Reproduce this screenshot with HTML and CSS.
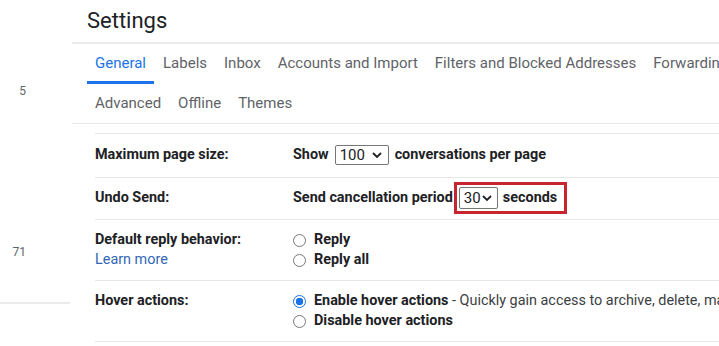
FILE: index.html
```html
<!DOCTYPE html>
<html lang="en">
<head>
  <meta charset="UTF-8">
  <meta name="viewport" content="width=device-width, initial-scale=1.0">
  <title>Settings</title>
  <link rel="stylesheet" href="styles.css">
</head>
<body>
  <div class="page">
    <aside class="sidebar">
      <span class="count count-top">5</span>
      <span class="count count-mid">71</span>
      <div class="side-rule"></div>
    </aside>

    <main class="settings">
      <h1 class="settings-title">Settings</h1>

      <nav class="tabs">
        <div class="tab-row">
          <a class="tab active">General</a>
          <a class="tab">Labels</a>
          <a class="tab">Inbox</a>
          <a class="tab">Accounts and Import</a>
          <a class="tab">Filters and Blocked Addresses</a>
          <a class="tab">Forwarding and POP/IMAP</a>
        </div>
        <div class="tab-row tab-row-last">
          <a class="tab">Advanced</a>
          <a class="tab">Offline</a>
          <a class="tab">Themes</a>
        </div>
      </nav>

      <div class="prefs">
        <div class="pref pref-page">
          <div class="pref-label">Maximum page size:</div>
          <div class="pref-value">
            Show
            <span class="select select-wide">100
              <svg class="chevron" viewBox="0 0 10 6" width="10" height="6"><path d="M1 1l4 4 4-4" fill="none" stroke="#202124" stroke-width="1.8"/></svg>
            </span>
            conversations per page
          </div>
        </div>

        <div class="pref pref-undo">
          <div class="pref-label">Undo Send:</div>
          <div class="pref-value">
            Send cancellation period
            <span class="highlight">
              <span class="select">30
                <svg class="chevron" viewBox="0 0 10 6" width="10" height="6"><path d="M1 1l4 4 4-4" fill="none" stroke="#202124" stroke-width="1.8"/></svg>
              </span>
              seconds
            </span>
          </div>
        </div>

        <div class="pref">
          <div class="pref-label">
            Default reply behavior:<br>
            <a class="learn">Learn more</a>
          </div>
          <div class="pref-value">
            <label class="option"><span class="radio"></span><span>Reply</span></label>
            <label class="option"><span class="radio"></span><span>Reply all</span></label>
          </div>
        </div>

        <div class="pref">
          <div class="pref-label">Hover actions:</div>
          <div class="pref-value">
            <label class="option"><span class="radio checked"></span><span>Enable hover actions<span class="note"> - Quickly gain access to archive, delete, mark as read, and snooze controls on hover.</span></span></label>
            <label class="option"><span class="radio"></span><span>Disable hover actions</span></label>
          </div>
        </div>
      </div>
    </main>
  </div>
</body>
</html>
```

FILE: styles.css
```css
/* Global */
body {
  margin: 0;
  background: #fff;
  color: #202124;
  font-family: Roboto, "Liberation Sans", Arial, sans-serif;
  overflow: hidden;
}

.page {
  display: flex;
  width: 719px;
  height: 346px;
  overflow: hidden;
}

/* Left rail */
.sidebar {
  width: 72px;
  flex-shrink: 0;
  display: flex;
  flex-direction: column;
}

.count {
  display: block;
  width: 26px;
  text-align: right;
  font-size: 12px;
  line-height: 16px;
  color: #5f6368;
}

.count-top {
  margin-top: 83px;
}

.count-mid {
  margin-top: 145px;
}

.side-rule {
  margin-top: 42px;
  width: 70px;
  height: 2px;
  background: #ebebeb;
}

/* Main column */
.settings {
  flex: 1;
  min-width: 0;
  white-space: nowrap;
  overflow: hidden;
}

.settings-title {
  margin: 0;
  padding-left: 15px;
  height: 42px;
  font-size: 22px;
  font-weight: 400;
  line-height: 41px;
  color: #202124;
  border-bottom: 2px solid #ececec;
}

/* Tabs */
.tabs {
  padding-left: 15px;
}

.tab-row {
  display: flex;
  gap: 1px;
}

.tab-row-last {
  margin-left: -15px;
  padding-left: 15px;
  border-bottom: 1px solid #e6e6e6;
}

.tab {
  padding: 9px 8px 8px;
  font-size: 15px;
  line-height: 20px;
  color: #5f6368;
  border-bottom: 3px solid transparent;
}

.tab-row-last .tab {
  padding-bottom: 7px;
}

.tab.active {
  color: #1a73e8;
  border-bottom-color: #1a73e8;
}

/* Preference rows */
.prefs {
  margin: 9px 0 0 23px;
  border-top: 1px solid #e6e6e6;
}

.pref {
  display: grid;
  grid-template-columns: 198px 1fr;
  padding: 10px 0;
  border-bottom: 1px solid #e6e6e6;
  font-size: 14.4px;
  line-height: 20px;
}

.pref-page {
  padding: 11px 0 12px;
  align-items: center;
}

.pref-undo {
  padding: 4px 0 5px;
  align-items: center;
}

.pref-label {
  font-weight: 700;
}

.pref-value {
  font-weight: 700;
  display: flex;
  flex-direction: column;
}

.pref-page .pref-value,
.pref-undo .pref-value {
  flex-direction: row;
  align-items: center;
  gap: 6px;
}

.learn {
  font-weight: 400;
  color: #3367b5;
}

/* Fake select boxes */
.select {
  display: inline-flex;
  align-items: center;
  justify-content: space-between;
  box-sizing: border-box;
  width: 39px;
  height: 22px;
  padding: 0 5px 0 4px;
  border: 1px solid #767676;
  border-radius: 2px;
  font-size: 15px;
  font-weight: 400;
  color: #202124;
}

.select-wide {
  width: 54px;
  height: 20px;
  padding-right: 6px;
}

.chevron {
  display: block;
}

/* Red annotation box */
.highlight {
  display: inline-flex;
  align-items: center;
  gap: 5px;
  box-sizing: border-box;
  height: 32px;
  padding: 0 7px 0 2px;
  margin-left: -5px;
  border: 3px solid #c8262f;
}

/* Radios */
.option {
  display: flex;
  align-items: center;
  line-height: 20px;
}

.radio {
  box-sizing: border-box;
  width: 13px;
  height: 13px;
  margin-right: 8px;
  border: 1px solid #767676;
  border-radius: 50%;
  flex-shrink: 0;
}

.radio.checked {
  border: 1.5px solid #1a73e8;
  background: radial-gradient(circle, #1a73e8 0 3.5px, #fff 4px);
}

.note {
  font-weight: 400;
  color: #3c4043;
}
```
